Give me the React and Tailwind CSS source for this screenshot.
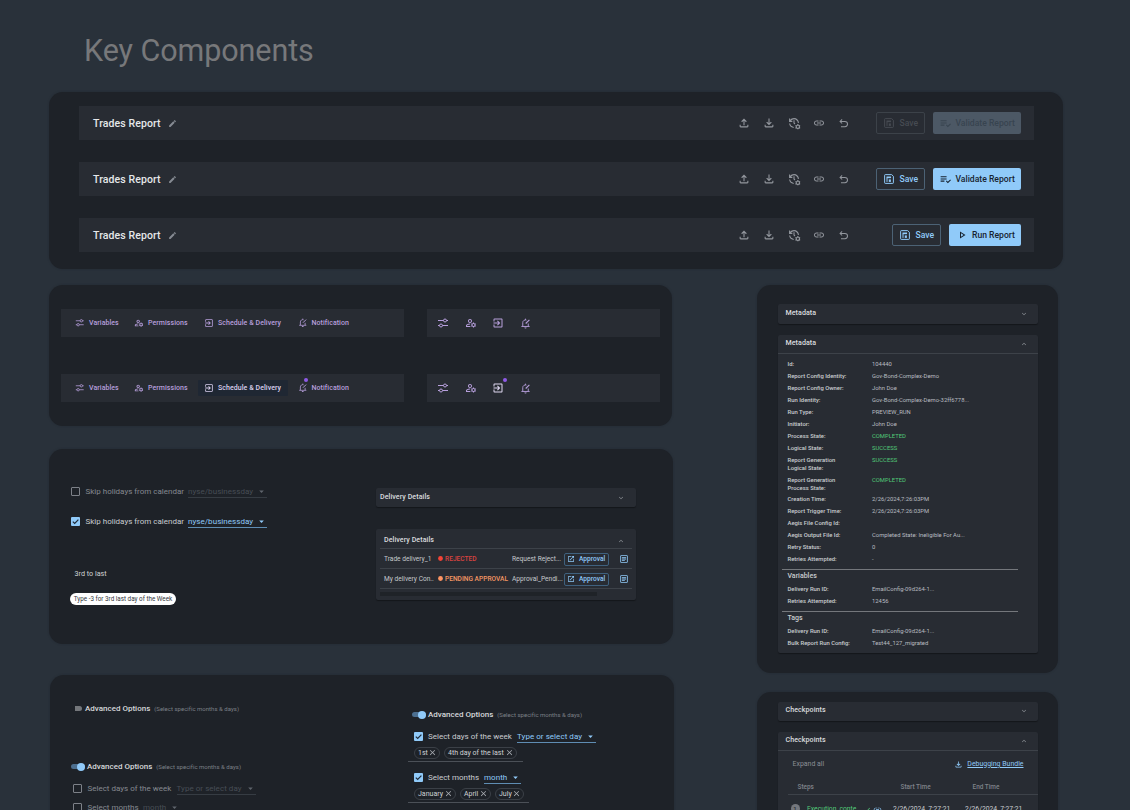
import React from 'react';
import {
  MdArrowDropDown,
  MdCheck,
  MdClose,
  MdEdit,
  MdExpandLess,
  MdExpandMore,
  MdLink,
  MdOpenInNew,
  MdOutlineArticle,
  MdOutlineExitToApp,
  MdOutlineFileDownload,
  MdOutlineFileUpload,
  MdOutlineManageAccounts,
  MdOutlineManageHistory,
  MdOutlinePlayArrow,
  MdPlaylistAddCheck,
} from 'react-icons/md';
import clsx from 'clsx';

const METADATA = [
  ['Id:', '104440'],
  ['Report Config Identity:', 'Gov-Bond-Complex-Demo'],
  ['Report Config Owner:', 'John Doe'],
  ['Run Identity:', 'Gov-Bond-Complex-Demo-32ff6778...'],
  ['Run Type:', 'PREVIEW_RUN'],
  ['Initiator:', 'John Doe'],
  ['Process State:', 'COMPLETED', true],
  ['Logical State:', 'SUCCESS', true],
  ['Report Generation Logical State:', 'SUCCESS', true],
  ['Report Generation Process State:', 'COMPLETED', true],
  ['Creation Time:', '2/26/2024,7:26:03PM'],
  ['Report Trigger Time:', '2/26/2024,7:26:03PM'],
  ['Aegis File Config Id:', ''],
  ['Aegis Output File Id:', 'Completed State: Ineligible For Au...'],
  ['Retry Status:', '0'],
  ['Retries Attempted:', '-'],
];

const VARIABLES = [
  ['Delivery Run ID:', 'EmailConfig-09d264-1...'],
  ['Retries Attempted:', '12456'],
];

const TAGS = [
  ['Delivery Run ID:', 'EmailConfig-09d264-1...'],
  ['Bulk Report Run Config:', 'Test44_127_migrated'],
];

/* Icons */

function UndoIcon({ className }) {
  return (
    <svg viewBox="0 0 24 24" className={className} fill="none" stroke="currentColor" strokeWidth="2.2">
      <path d="M9 3 4.500 7.500 9 12M4.500 7.500H15a5.700 5.700 0 0 1 0 11.500H6.500" />
    </svg>
  );
}

function SaveIcon({ className }) {
  return (
    <svg viewBox="0 0 24 24" className={className} fill="none" stroke="currentColor" strokeWidth="2.4">
      <path d="M3 1.500h15.500l4 4V21a1.500 1.500 0 0 1-1.500 1.500H3A1.500 1.500 0 0 1 1.500 21V3A1.500 1.500 0 0 1 3 1.500z" />
      <path d="M6 6h11v4H6z" fill="currentColor" stroke="none" />
      <path d="M7.200 9v10" />
      <path d="M11.500 13h5v6h-5z" fill="currentColor" stroke="none" />
    </svg>
  );
}

function SlidersIcon({ className }) {
  return (
    <svg viewBox="0 0 24 24" className={className} fill="none" stroke="currentColor" strokeWidth="2">
      <circle cx="16" cy="7" r="3" />
      <circle cx="8" cy="17" r="3" />
      <path d="M2 7h11M19 7h3M2 17h3M11 17h11" />
    </svg>
  );
}

function BellEditIcon({ className }) {
  return (
    <svg viewBox="0 0 24 24" className={className} fill="none" stroke="currentColor" strokeWidth="2">
      <path d="M14 4.500A6 6 0 0 0 6 10v8M18 12v6M3 18.500h18M12 1.500V4" />
      <path d="M12.500 12 20.500 4" strokeWidth="2.400" />
      <path d="M9.500 20.500h5a2.500 2.500 0 0 1-5 0z" fill="currentColor" stroke="none" />
    </svg>
  );
}

/* Report header bars */

function ReportBar({ disabled, run }) {
  return (
    <div className="flex h-[34px] items-center bg-[#282c33] pl-[14.5px] pr-[13px]">
      <span className="pt-[2px] text-[10.5px] font-medium tracking-[0.1px] text-[#e6e8ea]">Trades Report</span>
      <MdEdit className="ml-[7.500px] size-[9px] text-[#858a92]" />
      <div className="ml-auto flex items-center gap-[13px] text-[#92969d]">
        <MdOutlineFileUpload className="size-[12px] scale-110" />
        <MdOutlineFileDownload className="size-[12px] scale-110" />
        <MdOutlineManageHistory className="size-[12px] scale-110" />
        <MdLink className="size-[12px]" />
        <UndoIcon className="size-[11px]" />
      </div>
      <button
        className={clsx(
          'flex h-[22px] w-[49px] items-center rounded-[2px] border pl-[7px] text-[8.6px] font-medium',
          run ? 'ml-[43.500px]' : 'ml-[27.500px]',
          disabled ? 'border-[#3c4249] text-[#464b52]' : 'border-[#4c6275] text-[#90caf9]'
        )}
      >
        <SaveIcon className="mr-[5.500px] size-[10px]" />
        Save
      </button>
      <button
        className={clsx(
          'ml-[8px] flex h-[22px] items-center rounded-[2px] text-[8.6px] font-medium',
          run ? 'w-[72px] pl-[7px]' : 'w-[88px] pl-[6px]',
          disabled ? 'bg-[#4c5865] text-[#384450]' : 'bg-[#90caf9] text-[#172330]'
        )}
      >
        {run ? (
          <MdOutlinePlayArrow className="mr-[4px] size-[12px]" />
        ) : (
          <MdPlaylistAddCheck className="mr-[3.500px] size-[13px]" />
        )}
        <span className="whitespace-nowrap">{run ? 'Run Report' : 'Validate Report'}</span>
      </button>
    </div>
  );
}

/* Tool tabs */

function TabBar({ active }) {
  return (
    <div className="flex h-[28px] w-[343px] items-center bg-[#282c33] pl-[14px] text-[7px] font-medium tracking-[0.06px] text-[#b79fdc]">
      <span className="flex w-[59px] items-center gap-[4.500px]">
        <SlidersIcon className="size-[9.500px]" />
        Variables
      </span>
      <span className="flex w-[63.500px] items-center gap-[4px]">
        <MdOutlineManageAccounts className="size-[10px]" />
        Permissions
      </span>
      <span
        className={clsx(
          'flex h-[16px] w-[90px] items-center gap-[4.500px] rounded-[1px] pl-[6px]',
          active && 'bg-[#1f2733] text-[#d9d0ee]'
        )}
      >
        <MdOutlineExitToApp className="size-[10px]" />
        Schedule & Delivery
      </span>
      <span className="ml-[10.500px] flex items-center gap-[4px]">
        <span className="relative">
          <BellEditIcon className="size-[9.500px]" />
          {active && <i className="absolute -top-[5.500px] left-[5.500px] size-[4px] rounded-full bg-[#8f5be8]" />}
        </span>
        Notification
      </span>
    </div>
  );
}

function IconBar({ active }) {
  return (
    <div className="flex h-[28px] w-[232.500px] items-center gap-[15.500px] bg-[#282c33] pl-[10px] text-[#b79fdc]">
      <SlidersIcon className="size-[12px]" />
      <MdOutlineManageAccounts className="size-[12px]" />
      <span className="relative">
        <MdOutlineExitToApp className={clsx('size-[12px]', active && 'text-[#dfd8f2]')} />
        {active && <i className="absolute -top-[4px] left-[10.500px] size-[4px] rounded-full bg-[#8f5be8]" />}
      </span>
      <BellEditIcon className="size-[11px]" />
    </div>
  );
}

/* Form controls */

function Checkbox({ checked }) {
  return checked ? (
    <span className="flex size-[9px] shrink-0 items-center justify-center rounded-[1px] bg-[#90caf9] text-[#1e2a38]">
      <svg viewBox="0 0 9 9" className="size-[9px]" fill="none" stroke="currentColor" strokeWidth="1.200">
        <path d="M1.800 4.600 3.700 6.500 7.400 2.600" />
      </svg>
    </span>
  ) : (
    <span className="-mt-px size-[9px] shrink-0 rounded-[1px] border border-[#7d8188]" />
  );
}

function CheckRow({ label, value, checked, labelWidth, selectWidth }) {
  return (
    <div className="flex h-[12px] items-center text-[8px] leading-[12px]">
      <Checkbox checked={checked} />
      <span
        className={clsx(
          'ml-[5.500px] shrink-0 whitespace-nowrap',
          labelWidth,
          checked ? 'text-[#c9ccd0]' : 'text-[#858990]'
        )}
      >
        {label}
      </span>
      <span
        className={clsx(
          'flex h-[12px] items-center justify-between border-b pt-[1px] tracking-[0.050px]',
          selectWidth,
          checked ? 'border-[#5f8db3] text-[#90caf9]' : 'border-[#363c43] text-[#474d55]'
        )}
      >
        <span className="whitespace-nowrap">{value}</span>
        <MdArrowDropDown className={clsx('-mt-[1px] size-[11px]', !checked && 'text-[#5f656d]')} />
      </span>
    </div>
  );
}

function AdvancedLabel() {
  return (
    <>
      <span className="text-[8px] font-medium text-[#d6d8db]">Advanced Options</span>
      <span className="ml-[4px] text-[6px] tracking-[0.020px] text-[#7c8087]">(Select specific months & days)</span>
    </>
  );
}

function AdvancedOn() {
  return (
    <div className="flex h-[10px] items-center whitespace-nowrap">
      <span className="mr-[2px] flex h-[5px] w-[14px] items-center justify-end rounded-full bg-[#4c6f90]">
        <i className="size-[8px] shrink-0 rounded-full bg-[#90caf9]" />
      </span>
      <AdvancedLabel />
    </div>
  );
}

function Chip({ children, className }) {
  return (
    <span
      className={clsx(
        'flex h-[12px] items-center justify-between rounded-full border border-[#3b4047] pl-[3px] pr-[2px] text-[7px] text-[#d0d2d5]',
        className
      )}
    >
      {children}
      <MdClose className="-mt-px size-[9px] text-[#a7abb1]" />
    </span>
  );
}

/* Accordions */

function AccordionHead({ title, open, className }) {
  const Chevron = open ? MdExpandLess : MdExpandMore;
  return (
    <div className={clsx('flex items-center pr-[10px] text-[7.100px] font-medium tracking-[0.060px] text-[#dadcdf]', className)}>
      {title}
      <Chevron className="ml-auto mt-[1px] size-[8px] text-[#92969c]" />
    </div>
  );
}

function Pairs({ rows }) {
  return (
    <div className="flex flex-col gap-[3.970px] text-[5.870px] leading-[8px]">
      {rows.map(([label, value, good], idx) => (
        <div key={idx} className="flex">
          <span className="w-[84.500px] pr-[20px] font-medium text-[#c9ccd0]">{label}</span>
          <span className={good ? 'text-[#52c878]' : 'text-[#b9bcc1]'}>{value}</span>
        </div>
      ))}
    </div>
  );
}

function DeliveryRow({ name, status, message, rejected }) {
  return (
    <div className="mx-[4px] flex h-[20px] items-center whitespace-nowrap border-b border-[#3d4249] pl-[4px] pt-[2px] text-[6.600px] text-[#c6c9cd]">
      <span className="w-[54px]">{name}</span>
      <span className={clsx('flex w-[74px] items-center font-medium', rejected ? 'text-[#d84340]' : 'text-[#f59764]')}>
        <svg viewBox="0 0 10 10" className="-mt-[1px] mr-[2px] size-[5px]">
          <circle cx="5" cy="5" r="4.800" fill={rejected ? '#f44336' : '#ff9563'} />
        </svg>
        {status}
      </span>
      <span className="w-[52px]">{message}</span>
      <button className="-mt-[1px] flex h-[13px] w-[45px] items-center rounded-[2px] border border-[#3f617e] pl-[2px] pt-px text-[6.600px] font-medium text-[#90caf9]">
        <MdOpenInNew className="-mt-[1px] mr-[4px] size-[8px]" />
        Approval
      </button>
      <MdOutlineArticle className="-mt-[1px] ml-auto mr-[3.500px] size-[10px] text-[#90caf9]" />
    </div>
  );
}

const PANEL = 'rounded-[14px] bg-[#1e2228] shadow-[0_0_2px_rgba(30,34,40,0.5)]';
const ACCORDION = 'rounded-[2px] bg-[#282c33] shadow-[0_1px_1px_rgba(0,0,0,0.35)]';

export default function App() {
  return (
    <div className="h-[810px] w-[1130px] overflow-hidden bg-[#29313a] pl-[49px] font-['Roboto','Liberation_Sans',sans-serif] antialiased">
      <h1 className="h-[92px] pl-[35px] pt-[32px] text-[30.500px] leading-[38px] tracking-[-0.080px] text-[#77787a]">Key Components</h1>

      <section className={clsx(PANEL, 'flex h-[177px] w-[1014px] flex-col gap-[22px] pl-[29.500px] pr-[29px] pt-[14px]')}>
        <ReportBar disabled />
        <ReportBar />
        <ReportBar run />
      </section>

      <div className="mt-[16px] flex">
        <div className="w-[708px]">
          {/* Tabs */}
          <section className={clsx(PANEL, 'flex h-[141px] w-[623px] flex-col gap-[37px] pl-[12px] pt-[24px]')}>
            <div className="flex gap-[23px]">
              <TabBar />
              <IconBar />
            </div>
            <div className="flex gap-[23px]">
              <TabBar active />
              <IconBar active />
            </div>
          </section>

          {/* Calendar + deliveries */}
          <section className={clsx(PANEL, 'mt-[23px] flex h-[195px] w-[624px]')}>
            <div className="w-[327px] pl-[22px] pt-[37px]">
              <CheckRow label="Skip holidays from calendar" value="nyse/businessday" labelWidth="w-[102.500px]" selectWidth="w-[79px]" />
              <div className="h-[17.500px]" />
              <CheckRow checked label="Skip holidays from calendar" value="nyse/businessday" labelWidth="w-[102.500px]" selectWidth="w-[79px]" />
              <div className="mt-[41px] pl-[3.500px] text-[7.200px] leading-[10px] text-[#d0d2d5]">3rd to last</div>
              <div className="-ml-[1px] mt-[14.500px] flex h-[12px] w-[106px] items-center justify-center whitespace-nowrap rounded-full bg-white pt-px text-[6.300px] text-[#33363a]">
                Type -3 for 3rd last day of the Week
              </div>
            </div>
            <div className="w-[260px] pt-[38.500px]">
              <div className={ACCORDION}>
                <AccordionHead title="Delivery Details" className="h-[19px] pl-[4px] !pr-[11.500px]" />
              </div>
              <div className={clsx(ACCORDION, 'mt-[22.500px] h-[71px]')}>
                <AccordionHead open title="Delivery Details" className="mx-[4px] h-[20px] border-b border-[#3d4249] pl-[4px] !pr-[7.500px] pt-[3px]" />
                <DeliveryRow rejected name="Trade delivery_1" status="REJECTED" message="Request Reject..." />
                <DeliveryRow name="My delivery Con.." status="PENDING APPROVAL" message="Approval_Pendi..." />
                <div className="ml-[4px] mt-[3px] h-[4px] w-[217px] bg-[#1f2328]" />
              </div>
            </div>
          </section>

          {/* Advanced options */}
          <section className={clsx(PANEL, 'ml-[1px] mt-[31px] flex h-[180px] w-[624px]')}>
            <div className="w-[358px] pl-[21px] pt-[28.500px]">
              <div className="flex h-[10px] items-center whitespace-nowrap pl-[3.500px]">
                <span className="mr-[3px] h-[5px] w-[7.500px] rounded-r-full bg-[#74777b]" />
                <AdvancedLabel />
              </div>
              <div className="mt-[48px]">
                <AdvancedOn />
              </div>
              <div className="mt-[11px] flex flex-col gap-[7.500px] pl-[2px]">
                <CheckRow label="Select days of the week" value="Type or select day" labelWidth="w-[89px]" selectWidth="w-[79px]" />
                <CheckRow label="Select months" value="month" labelWidth="w-[55.500px]" selectWidth="w-[37px]" />
              </div>
            </div>
            <div className="pl-[4px] pt-[34.500px]">
              <AdvancedOn />
              <div className="mt-[11px] pl-[1.500px]">
                <CheckRow checked label="Select days of the week" value="Type or select day" labelWidth="w-[89px]" selectWidth="w-[79px]" />
              </div>
              <div className="-ml-[4px] mt-[4.500px] flex h-[15px] w-[114.500px] gap-[4px] border-b border-[#4b5057] pl-[6px]">
                <Chip className="w-[26px]">1st</Chip>
                <Chip className="w-[73px]">4th day of the last</Chip>
              </div>
              <div className="mt-[9.500px] pl-[1.500px]">
                <CheckRow checked label="Select months" value="month" labelWidth="w-[56px]" selectWidth="w-[37px]" />
              </div>
              <div className="-ml-[4px] mt-[4.500px] flex h-[15px] w-[120.500px] gap-[4px] border-b border-[#4b5057] pl-[6px]">
                <Chip className="w-[42px]">January</Chip>
                <Chip className="w-[31px]">April</Chip>
                <Chip className="w-[29px]">July</Chip>
              </div>
            </div>
          </section>
        </div>

        <div className="w-[301px]">
          <section className={clsx(PANEL, 'h-[388px] pl-[21px] pr-[20px] pt-[19px]')}>
            <div className={ACCORDION}>
              <AccordionHead title="Metadata" className="h-[20px] pb-[2px] pl-[7.500px]" />
            </div>
            <div className={clsx(ACCORDION, 'mt-[10.500px] h-[318px]')}>
              <AccordionHead open title="Metadata" className="h-[19px] border-b border-[#3d4249] pl-[7.500px]" />
              <div className="pl-[9.500px] pt-[6.300px]">
                <Pairs rows={METADATA} />
              </div>
              <div className="ml-[3.500px] mr-[20.500px] mt-[6px] border-t border-[#74777c]" />
              <div className="pl-[9.500px]">
                <h3 className="mb-[3px] pt-[1px] text-[7px] font-medium leading-[11px] text-[#c9ccd0]">Variables</h3>
                <Pairs rows={VARIABLES} />
              </div>
              <div className="ml-[3.500px] mr-[20.500px] mt-[5.500px] border-t border-[#74777c]" />
              <div className="pl-[9.500px]">
                <h3 className="mb-[3px] pt-[1.500px] text-[7px] font-medium leading-[11px] text-[#c9ccd0]">Tags</h3>
                <Pairs rows={TAGS} />
              </div>
            </div>
          </section>

          <section className={clsx(PANEL, 'mt-[19px] h-[180px] pl-[21px] pr-[20px] pt-[9.500px]')}>
            <div className={ACCORDION}>
              <AccordionHead title="Checkpoints" className="h-[19.500px] pb-[1px] pl-[7.500px]" />
            </div>
            <div className={clsx(ACCORDION, 'mt-[10.500px] h-[140px]')}>
              <AccordionHead open title="Checkpoints" className="h-[19px] border-b border-[#3d4249] pl-[7.500px]" />
              <div className="flex h-[26px] items-center pl-[14.500px] pr-[14.500px] pt-[1px] text-[6.950px]">
                <span className="text-[#8b8f95]">Expand all</span>
                <MdOutlineFileDownload className="ml-auto mr-[4px] size-[9px] text-[#90caf9]" />
                <a className="text-[#90caf9] underline underline-offset-1">Debugging Bundle</a>
              </div>
              <div className="ml-[10px] flex h-[18px] items-center border-b border-[#3d4249] pl-[9.500px] pt-[6px] text-[6.450px] font-medium text-[#7f838a]">
                <span className="w-[103px]">Steps</span>
                <span className="w-[72px]">Start Time</span>
                <span>End Time</span>
              </div>
              <div className="flex h-[30px] items-center whitespace-nowrap pl-[12.500px] text-[6.750px] text-[#c9ccd0]">
                <span className="-mt-[2px] mr-[7.500px] flex size-[9px] items-center justify-center rounded-full bg-[#74777d] text-[6px] font-medium text-[#282c33]">
                  1
                </span>
                <span className="w-[56px] text-[#52c878]">Execution_conte...</span>
                <MdCheck className="size-[8px] text-[#52c878]" />
                <MdLink className="ml-[2px] size-[9px] text-[#90caf9]" />
                <span className="ml-[11px] w-[72px]">2/26/2024, 7:27:21</span>
                <span>2/26/2024, 7:27:21</span>
              </div>
            </div>
          </section>
        </div>
      </div>
    </div>
  );
}
